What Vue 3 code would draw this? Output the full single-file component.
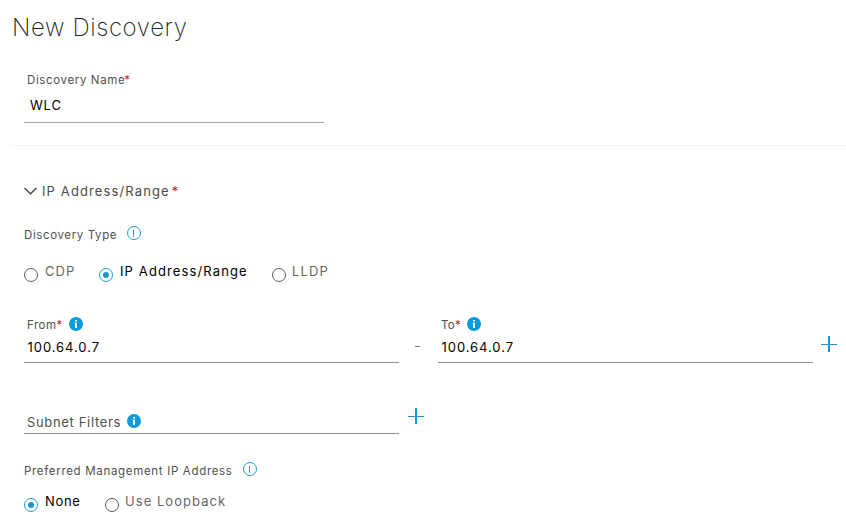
<script setup>
import { ref, h } from 'vue'

const discoveryType = ref('range')
const managementIp = ref('none')
const types = [
  { id: 'cdp', label: 'CDP' },
  { id: 'range', label: 'IP Address/Range' },
  { id: 'lldp', label: 'LLDP' },
]
const managementOptions = [
  { id: 'none', label: 'None' },
  { id: 'loopback', label: 'Use Loopback' },
]

const svg = (children) =>
  h('svg', { width: 14, height: 14, viewBox: '0 0 14 14', fill: 'none' }, children)

const InfoOutline = () =>
  svg([
    h('circle', { cx: 7, cy: 7, r: 6.5, stroke: '#1a9fc8' }),
    h('path', { d: 'M6.5 4v7', stroke: '#1a9fc8' }),
  ])

const InfoSolid = () =>
  svg([
    h('circle', { cx: 7, cy: 7, r: 7, fill: '#0a9bdc' }),
    h('path', { d: 'M6 3h2v1.6H6zM5.5 5.7H8V11H6V6.7h-.5z', fill: '#fff' }),
  ])

const Radio = (props) =>
  svg([
    h('circle', { cx: 7, cy: 7, r: 6.5, stroke: props.on ? '#1a9fc8' : '#5c5c5c' }),
    props.on ? h('circle', { cx: 7, cy: 7, r: 3, fill: '#1499cf' }) : null,
  ])
Radio.props = ['on']

const Plus = () =>
  h('svg', { width: 16, height: 16, viewBox: '0 0 16 16' }, [
    h('path', { d: 'M0 8h16v1H0z', fill: '#2a8fb4' }),
    h('path', { d: 'M7 0h2v16H7z', fill: '#0a9bdc' }),
  ])
</script>

<template>
  <main class="page">
    <h1 class="title"><span>New Discovery</span></h1>

    <div class="field name-field">
      <div class="label"><span class="t-name">Discovery Name</span><span class="star">*</span></div>
      <div class="value t-wlc">WLC</div>
    </div>

    <section class="section">
      <h2 class="heading">
        <svg width="13" height="8" viewBox="0 0 13 8" fill="none">
          <path d="M.5 1l6 5.8L12.5 1" stroke="#444" stroke-width="1.3" />
        </svg>
        <span class="t-heading">IP Address/Range</span><span class="star">*</span>
      </h2>

      <div class="caption"><span class="t-type">Discovery Type</span><InfoOutline /></div>
      <div class="radios">
        <label
          v-for="o in types"
          :key="o.id"
          :class="['radio', o.id, { on: discoveryType === o.id }]"
          @click="discoveryType = o.id"
        >
          <Radio :on="discoveryType === o.id" /><span>{{ o.label }}</span>
        </label>
      </div>

      <div class="ip-range">
        <div class="field ip-field">
          <div class="label"><span class="t-from">From</span><span class="star">*</span><InfoSolid /></div>
          <div class="value t-ip">100.64.0.7</div>
        </div>
        <span class="dash"></span>
        <div class="field ip-field">
          <div class="label to"><span class="t-to">To</span><span class="star">*</span><InfoSolid /></div>
          <div class="value t-ip">100.64.0.7</div>
        </div>
        <span class="plus"><Plus /></span>
      </div>

      <div class="subnet">
        <div class="field subnet-field"><span class="t-subnet">Subnet Filters</span><InfoSolid /></div>
        <span class="plus"><Plus /></span>
      </div>

      <div class="caption management">
        <span class="t-management">Preferred Management IP Address</span><InfoOutline />
      </div>
      <div class="radios">
        <label
          v-for="o in managementOptions"
          :key="o.id"
          :class="['radio', o.id, { on: managementIp === o.id }]"
          @click="managementIp = o.id"
        >
          <Radio :on="managementIp === o.id" /><span>{{ o.label }}</span>
        </label>
      </div>
    </section>
  </main>
</template>

<style>
body {
  background: #fff;
  overflow: hidden;
}
</style>

<style scoped>
.page {
  height: 526px;
  box-sizing: border-box;
  overflow: hidden;
  padding-left: 12px;
  font-family: Inter, 'Liberation Sans', sans-serif;
  font-size: 11.5px;
  color: #505050;
  white-space: nowrap;
}
.page :deep(svg) {
  display: block;
  flex: none;
}
.title {
  margin: 0;
  height: 53px;
  line-height: 56px;
  font-size: 24px;
  font-weight: 200;
  letter-spacing: 0.6px;
  color: #222;
}
.field {
  box-sizing: border-box;
  border-bottom: 1px solid #939393;
}
.label {
  display: flex;
  align-items: center;
  height: 20px;
  line-height: 20px;
  padding-left: 3px;
}
.label :deep(svg) {
  margin: -2px 0 0 7px;
}
.label.to :deep(svg) {
  margin-left: 6px;
}
.star {
  color: #d01818;
}
.name-field .star {
  margin-left: -1px;
}
.value {
  color: #000;
  font-size: 13px;
  padding-left: 3.5px;
}
.name-field {
  width: 300px;
  height: 53px;
  margin: 17px 0 0 12px;
  border-color: #a5a5a5;
}
.name-field .value {
  padding-left: 6px;
  line-height: 30px;
}
.section {
  margin-top: 22px;
  border-top: 1px solid #f3f3f3;
  padding: 35px 0 0 12px;
}
.heading {
  display: flex;
  align-items: center;
  height: 20px;
  margin: 0;
  font-size: 13px;
  font-weight: 400;
  color: #4b4b4b;
}
.t-heading {
  margin-left: 5px;
}
.heading .star {
  margin-left: 2px;
}
.caption {
  display: flex;
  align-items: center;
  height: 20px;
  line-height: 20px;
  margin-top: 23px;
}
.caption span {
  padding-top: 1px;
}
.caption :deep(svg) {
  margin: -2px 0 0 10px;
}
.radios {
  display: flex;
  height: 20px;
  line-height: 20px;
  margin-top: 17px;
  font-size: 13px;
  color: #666;
}
.radio {
  display: flex;
  gap: 7px;
}
.radio :deep(svg) {
  margin-top: 7px;
}
.radio.on {
  color: #000;
}
.cdp {
  width: 75px;
}
.range {
  width: 173px;
}
.none {
  width: 81px;
}
.lldp,
.loopback {
  gap: 6px;
}
.ip-range {
  display: flex;
  margin-top: 34px;
}
.ip-field {
  width: 375px;
  height: 48px;
}
.ip-field .value {
  line-height: 24px;
}
.dash {
  width: 5px;
  height: 1px;
  margin: 31px 18px 0 16px;
  background: #777;
}
.ip-range .plus {
  margin: 21px 0 0 8px;
}
.subnet {
  display: flex;
  margin-top: 45px;
}
.subnet-field {
  display: flex;
  align-items: center;
  width: 375px;
  height: 26px;
  padding: 2px 0 0 3px;
  font-size: 13px;
}
.subnet-field :deep(svg) {
  margin: -1px 0 0 6px;
}
.subnet .plus {
  margin-left: 9px;
}
.management {
  margin-top: 26px;
}
.management + .radios {
  margin-top: 11px;
}
.t-name { letter-spacing: 0.63px; }
.t-type { letter-spacing: 0.62px; }
.t-wlc { letter-spacing: 0.8px; }
.t-heading, .radio { letter-spacing: 1.12px; }
.none { letter-spacing: 0.7px; }
.loopback { letter-spacing: 1.05px; }
.t-ip { letter-spacing: 0.95px; }
.t-from { letter-spacing: 0.5px; }
.t-to { letter-spacing: 0.3px; }
.t-subnet { letter-spacing: 0.66px; }
.t-management { letter-spacing: 0.68px; }
</style>
